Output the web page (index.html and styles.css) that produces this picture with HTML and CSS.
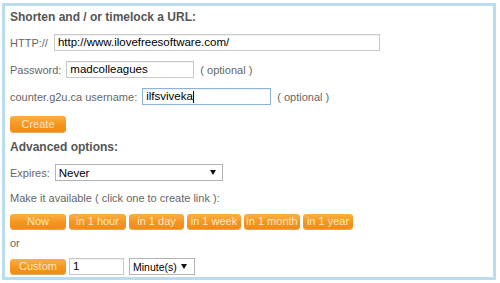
FILE: index.html
```html
<!DOCTYPE html>
<html>
<head>
<meta charset="utf-8">
<link rel="stylesheet" href="styles.css">
</head>
<body>
<div class="panel">
  <div class="title">Shorten and / or timelock a URL:</div>
  <div class="row r-http">
    <span class="lbl">HTTP://</span>
    <span class="input w-url">http://www.ilovefreesoftware.com/</span>
  </div>
  <div class="row r-pw">
    <span class="lbl">Password:</span>
    <span class="input w-pw">madcolleagues</span>
    <span class="lbl opt">( optional )</span>
  </div>
  <div class="row r-user">
    <span class="lbl">counter.g2u.ca username:</span>
    <span class="input w-user focus">ilfsviveka<span class="caret"></span></span>
    <span class="lbl opt">( optional )</span>
  </div>
  <div class="row r-create">
    <button class="btn w-create">Create</button>
  </div>
  <div class="title r-adv">Advanced options:</div>
  <div class="row r-exp">
    <span class="lbl">Expires:</span>
    <span class="select w-exp"><span>Never</span><svg width="6" height="5" viewBox="0 0 6 5"><path d="M0 0H6L3 5Z" fill="#111"/></svg></span>
  </div>
  <div class="text r-make">Make it available ( click one to create link ):</div>
  <div class="row btns">
    <button class="btn b-now">Now</button>
    <button class="btn b-hour">in 1 hour</button>
    <button class="btn b-day">in 1 day</button>
    <button class="btn b-week">in 1 week</button>
    <button class="btn b-month">in 1 month</button>
    <button class="btn b-year">in 1 year</button>
  </div>
  <div class="text r-or">or</div>
  <div class="row r-custom">
    <button class="btn w-custom">Custom</button>
    <span class="input w-num">1</span>
    <span class="select w-unit"><span>Minute(s)</span><svg width="6" height="5" viewBox="0 0 6 5"><path d="M0 0H6L3 5Z" fill="#111"/></svg></span>
  </div>
</div>
</body>
</html>
```
FILE: styles.css
```css
html, body {
  margin: 0;
  padding: 0;
  background: #fff;
}
body {
  font-family: "Liberation Sans", Arial, sans-serif;
  font-size: 11px;
  color: #666;
}
.panel {
  margin: 3px 0 0 2px;
  width: 483px;
  border: 3px solid #b9dcf1;
  padding: 4px 0 2px 5px;
  box-sizing: content-box;
}
.title {
  font-weight: bold;
  font-size: 12px;
  color: #555;
  line-height: 14px;
  height: 14px;
}
.text {
  line-height: 14px;
  height: 14px;
}
.row {
  display: flex;
  align-items: center;
  height: 17px;
  gap: 5px;
}
.lbl {
  white-space: nowrap;
}
.opt { margin-left: 1px; }
.input {
  box-sizing: border-box;
  height: 17px;
  border: 1px solid #c8c8c8;
  box-shadow: inset 0 1px 1px rgba(0,0,0,0.06);
  color: #000;
  font-size: 11.5px;
  padding: 0 3px;
  line-height: 15px;
  display: flex;
  align-items: center;
  white-space: nowrap;
}
.input.focus {
  border-color: #8ab4de;
}
.caret {
  display: inline-block;
  width: 1px;
  height: 12px;
  background: #000;
}
.select {
  box-sizing: border-box;
  height: 17px;
  border: 1px solid #b3b3b3;
  color: #000;
  font-size: 11.5px;
  padding: 0 6px 0 3px;
  display: flex;
  align-items: center;
  justify-content: space-between;
  background: #fff;
}
.btn {
  box-sizing: border-box;
  height: 15px;
  border: none;
  border-radius: 3px;
  background: linear-gradient(#fbb047, #f5951f 55%, #f08c14);
  color: #fde6c4;
  font-family: "Liberation Sans", Arial, sans-serif;
  font-size: 11px;
  padding: 0;
  line-height: 15px;
  box-shadow: 0 1px 0 #e2a868;
}
.r-http { margin-top: 10px; gap: 6px; }
.w-url { width: 326px; }
.r-pw { margin-top: 10px; }
.w-pw { width: 128px; }
.r-user { margin-top: 10px; }
.w-user { width: 129px; }
.r-create { margin-top: 11px; height: 16px; }
.w-create { width: 56px; height: 16px; }
.r-adv { margin-top: 8px; }
.r-exp { margin-top: 10px; }
.w-exp { width: 168px; }
.r-make { margin-top: 10px; }
.btns { margin-top: 9px; height: 15px; gap: 3px; }
.b-now { width: 56px; }
.b-hour { width: 57px; }
.b-day { width: 55px; }
.b-week { width: 54px; }
.b-month { width: 56px; }
.b-year { width: 50px; }
.r-or { margin-top: 7px; }
.r-custom { margin-top: 8px; gap: 3px; }
.w-custom { width: 56px; }
.w-num { width: 55px; }
.w-unit { width: 66px; margin-left: 2px; padding-right: 7px; font-size: 10.5px; }
```
